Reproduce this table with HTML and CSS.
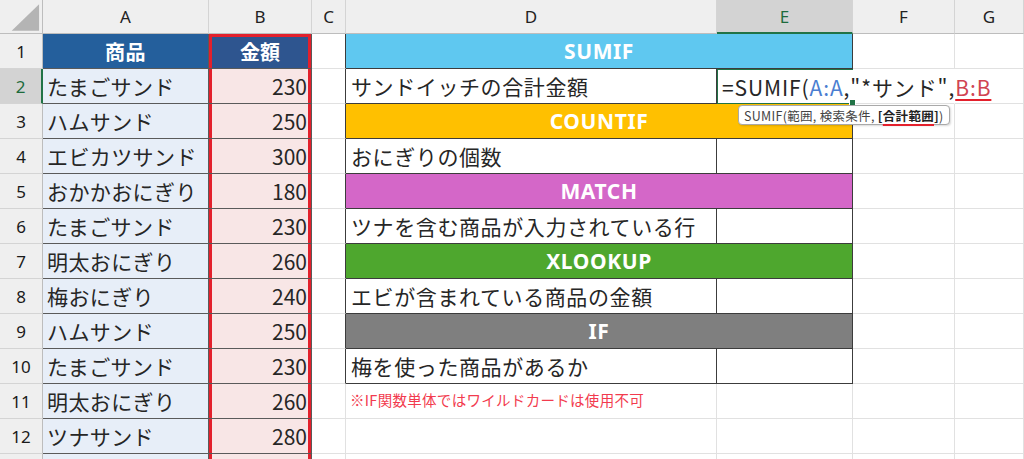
FILE: index.html
```html
<!DOCTYPE html>
<html lang="ja">
<head>
<meta charset="utf-8">
<title>SUMIF</title>
<link rel="stylesheet" href="styles.css">
</head>
<body>
<div class="sheet">
  <!-- header row -->
  <div class="ch corner"><svg width="43" height="34" viewBox="0 0 43 34"><polygon points="40,4 40,31 12,31" fill="#b4b4b4"/></svg></div>
  <div class="ch">A</div>
  <div class="ch">B</div>
  <div class="ch">C</div>
  <div class="ch">D</div>
  <div class="ch sel">E</div>
  <div class="ch">F</div>
  <div class="ch">G</div>

  <!-- row 1 -->
  <div class="rh">1</div>
  <div class="c ta th tha">商品</div>
  <div class="c tb th thb">金額</div>
  <div class="c cc"></div>
  <div class="c bx hd sumif span2">SUMIF</div>
  <div class="c"></div>
  <div class="c"></div>

  <!-- row 2 -->
  <div class="rh rsel">2</div>
  <div class="c ta">たまごサンド</div>
  <div class="c tb num">230</div>
  <div class="c cc"></div>
  <div class="c bx txt">サンドイッチの合計金額</div>
  <div class="c bx active"><span class="formula">=SUMIF(<span class="ref-a">A:A</span>,"*サンド",<span class="ref-b">B:B</span></span><span class="handle"></span>
    <div class="tip">SUMIF(範囲,&nbsp;検索条件,&nbsp;<b>[<u>合計範囲</u>]</b>)</div>
  </div>
  <div class="c nob"></div>
  <div class="c"></div>

  <!-- row 3 -->
  <div class="rh">3</div>
  <div class="c ta">ハムサンド</div>
  <div class="c tb num">250</div>
  <div class="c cc"></div>
  <div class="c bx hd countif span2">COUNTIF</div>
  <div class="c"></div>
  <div class="c"></div>

  <!-- row 4 -->
  <div class="rh">4</div>
  <div class="c ta">エビカツサンド</div>
  <div class="c tb num">300</div>
  <div class="c cc"></div>
  <div class="c bx txt">おにぎりの個数</div>
  <div class="c bx"></div>
  <div class="c"></div>
  <div class="c"></div>

  <!-- row 5 -->
  <div class="rh">5</div>
  <div class="c ta">おかかおにぎり</div>
  <div class="c tb num">180</div>
  <div class="c cc"></div>
  <div class="c bx hd match span2">MATCH</div>
  <div class="c"></div>
  <div class="c"></div>

  <!-- row 6 -->
  <div class="rh">6</div>
  <div class="c ta">たまごサンド</div>
  <div class="c tb num">230</div>
  <div class="c cc"></div>
  <div class="c bx txt">ツナを含む商品が入力されている行</div>
  <div class="c bx"></div>
  <div class="c"></div>
  <div class="c"></div>

  <!-- row 7 -->
  <div class="rh">7</div>
  <div class="c ta">明太おにぎり</div>
  <div class="c tb num">260</div>
  <div class="c cc"></div>
  <div class="c bx hd xlookup span2">XLOOKUP</div>
  <div class="c"></div>
  <div class="c"></div>

  <!-- row 8 -->
  <div class="rh">8</div>
  <div class="c ta">梅おにぎり</div>
  <div class="c tb num">240</div>
  <div class="c cc"></div>
  <div class="c bx txt">エビが含まれている商品の金額</div>
  <div class="c bx"></div>
  <div class="c"></div>
  <div class="c"></div>

  <!-- row 9 -->
  <div class="rh">9</div>
  <div class="c ta">ハムサンド</div>
  <div class="c tb num">250</div>
  <div class="c cc"></div>
  <div class="c bx hd iff span2">IF</div>
  <div class="c"></div>
  <div class="c"></div>

  <!-- row 10 -->
  <div class="rh">10</div>
  <div class="c ta">たまごサンド</div>
  <div class="c tb num">230</div>
  <div class="c cc"></div>
  <div class="c bx txt">梅を使った商品があるか</div>
  <div class="c bx"></div>
  <div class="c"></div>
  <div class="c"></div>

  <!-- row 11 -->
  <div class="rh">11</div>
  <div class="c ta">明太おにぎり</div>
  <div class="c tb num">260</div>
  <div class="c"></div>
  <div class="c note">※IF関数単体ではワイルドカードは使用不可</div>
  <div class="c"></div>
  <div class="c"></div>
  <div class="c"></div>

  <!-- row 12 -->
  <div class="rh">12</div>
  <div class="c ta">ツナサンド</div>
  <div class="c tb num">280</div>
  <div class="c"></div>
  <div class="c"></div>
  <div class="c"></div>
  <div class="c"></div>
  <div class="c"></div>

  <!-- row 13 (only its top edge is visible) -->
  <div class="rh"></div>
  <div class="c ta"></div>
  <div class="c tb"></div>
  <div class="c"></div>
  <div class="c"></div>
  <div class="c"></div>
  <div class="c"></div>
  <div class="c"></div>
</div>
</body>
</html>
```

FILE: styles.css
```css
html, body {
  margin: 0;
  padding: 0;
  background: #ffffff;
  overflow: hidden;
}

body {
  width: 1024px;
  height: 459px;
  font-family: "Noto Sans CJK JP", "Noto Sans", sans-serif;
  color: #262626;
}

.sheet {
  display: grid;
  grid-template-columns: 43px 166px 103px 34px 371px 136px 102px 69px;
  grid-template-rows: 34px repeat(13, 35px);
  background: #ffffff;
}

.ch {
  box-sizing: border-box;
  background: #efefef;
  border-right: 1px solid #d4d4d4;
  border-bottom: 1px solid #bdbdbd;
  display: flex;
  align-items: center;
  justify-content: center;
  font-family: "Noto Sans", "Open Sans", sans-serif;
  font-size: 17px;
  color: #222;
}

.ch.corner {
  border-right: 1px solid #bdbdbd;
  align-items: stretch;
  justify-content: stretch;
}

.ch.sel {
  background: #d3d3d3;
  color: #1d6b3c;
  border-bottom: 2px solid #217346;
}

.rh {
  box-sizing: border-box;
  background: #efefef;
  border-right: 1px solid #bdbdbd;
  border-bottom: 1px solid #d4d4d4;
  display: flex;
  align-items: center;
  justify-content: center;
  font-family: "Noto Sans", "Open Sans", sans-serif;
  font-size: 17px;
  color: #1a1a1a;
}

.rh.rsel {
  background: #d3d3d3;
  color: #1d6b3c;
  border-right: 2px solid #217346;
}

.c {
  box-sizing: border-box;
  border-right: 1px solid #e1e1e1;
  border-bottom: 1px solid #e1e1e1;
  display: flex;
  align-items: center;
  font-size: 21px;
  white-space: nowrap;
  min-width: 0;
}

.ta {
  background: #e7eef8;
  border-right: 1px solid #5a5a5a;
  border-bottom: 1px solid #5a5a5a;
  padding-left: 4px;
  letter-spacing: 0.4px;
}

.tb {
  background: #f8e6e6;
  border-right: 1px solid #5a5a5a;
  border-bottom: 1px solid #5a5a5a;
  box-shadow: inset 3px 0 #e3202c, inset -3px 0 #e3202c;
}

.num {
  justify-content: flex-end;
  padding-right: 4px;
}

.th {
  justify-content: center;
  color: #ffffff;
  font-weight: bold;
  font-size: 20px;
  padding-left: 0;
}

.tha { background: #245f9c; }

.thb {
  background: #2e558f;
  box-shadow: inset 3px 0 #e3202c, inset -3px 0 #e3202c, inset 0 3px #e3202c;
}

.cc {
  border-right: 1px solid #3c3c3c;
}

.bx {
  border-right: 1px solid #3c3c3c;
  border-bottom: 1px solid #3c3c3c;
  background: #ffffff;
}

.txt {
  padding-left: 5px;
  letter-spacing: 0.6px;
}

.span2 {
  grid-column: span 2;
}

.hd {
  justify-content: center;
  color: #ffffff;
  font-weight: bold;
  font-family: "Noto Sans", "Noto Sans CJK JP", sans-serif;
  font-size: 21px;
  letter-spacing: 0.6px;
}

.sumif { background: #5fc8f0; }
.countif { background: #ffc000; }
.match { background: #d467c8; }
.xlookup { background: #4ea72e; }
.iff { background: #7f7f7f; }

.active {
  position: relative;
  z-index: 2;
  overflow: visible;
  border-top: 1px solid #217346;
  border-left: 1px solid #217346;
  border-bottom: 1px solid #217346;
  border-right: none;
  padding-left: 4px;
}

.formula {
  color: #262626;
  letter-spacing: 0.9px;
}

.ref-a { color: #4a7ed1; }

.ref-b {
  color: #d04452;
  text-decoration: underline;
  text-decoration-color: #e3202c;
  text-decoration-thickness: 2px;
  text-underline-offset: 3px;
}

.handle {
  position: absolute;
  right: -3px;
  bottom: -3px;
  width: 5px;
  height: 5px;
  background: #217346;
  border: 1px solid #ffffff;
}

.tip {
  position: absolute;
  left: 20px;
  top: 35px;
  height: 20px;
  box-sizing: border-box;
  padding: 0 5px;
  display: flex;
  align-items: center;
  background: #ffffff;
  border: 1px solid #a9a9a9;
  border-radius: 4px;
  box-shadow: 1px 1px 2px rgba(0,0,0,0.15);
  font-size: 12.5px;
  letter-spacing: 0.3px;
  color: #444;
  z-index: 3;
}

.tip b {
  color: #222;
}

.tip u {
  text-decoration-color: #e3202c;
  text-decoration-thickness: 2px;
  text-underline-offset: 3px;
}

.nob {
  border-right-color: transparent;
}

.note {
  color: #f23b4e;
  font-size: 14.5px;
  letter-spacing: 0.3px;
  padding-left: 4px;
  padding-bottom: 3px;
}
```
